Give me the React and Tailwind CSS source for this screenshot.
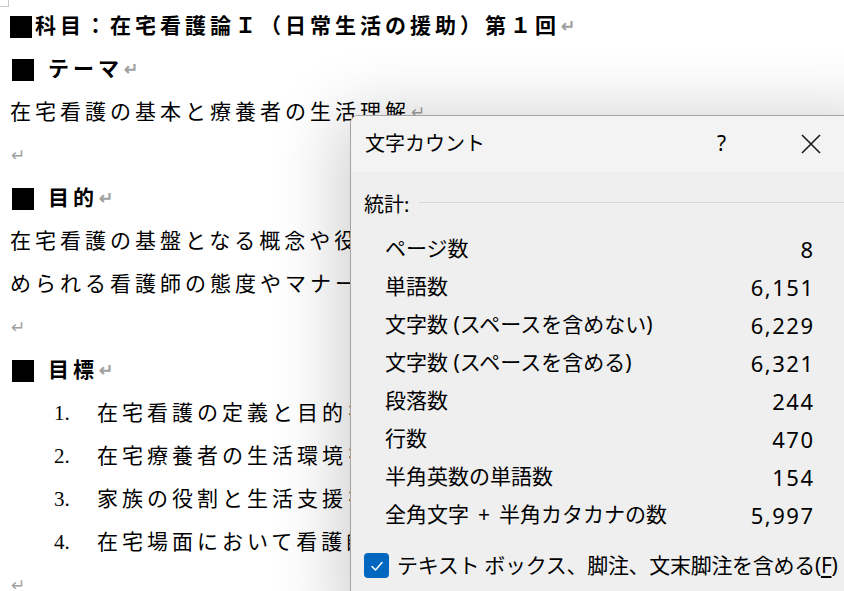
import React from "react";

const Ret = () => <span className="text-[#a0a0a0] text-[17px] tracking-normal ml-[1px]">↵</span>;

function Heading({ children }) {
  return (
    <div className="h-[43px] flex items-center font-bold whitespace-nowrap">
      <span className="w-[22px] h-[22px] bg-black inline-block ml-[2px]"></span>
      <span className="ml-[14px]">{children}</span>
      <Ret />
    </div>
  );
}

function Line({ children, ret }) {
  return (
    <div className="h-[43px] flex items-center whitespace-nowrap">
      <span>{children}</span>
      {ret && <Ret />}
    </div>
  );
}

function Item({ n, children }) {
  return (
    <div className="h-[43px] flex items-center whitespace-nowrap">
      <span className="w-[43px] ml-[44px] tracking-normal">{n}.</span>
      <span>{children}</span>
    </div>
  );
}

const rows = [
  ["ページ数", "8"],
  ["単語数", "6,151"],
  ["文字数 (スペースを含めない)", "6,229"],
  ["文字数 (スペースを含める)", "6,321"],
  ["段落数", "244"],
  ["行数", "470"],
  ["半角英数の単語数", "154"],
];

export default function App() {
  return (
    <div className="relative w-[844px] h-[591px] overflow-hidden bg-white">
      <div className="absolute left-0 top-[6px] w-[8px] h-px bg-[#c8c8c8]"></div>
      <div className="absolute left-[8px] top-0 w-px h-[7px] bg-[#c8c8c8]"></div>

      <div className="pt-[5px] pl-[10px] text-[21px] tracking-[4px] text-black font-['Liberation_Serif','Noto_Sans_CJK_JP',serif]">
        <div className="h-[43px] flex items-center font-bold whitespace-nowrap">
          <span className="w-[22px] h-[22px] bg-black inline-block mr-[3px]"></span>
          <span>科目：在宅看護論Ｉ（日常生活の援助）第１回</span>
          <Ret />
        </div>
        <Heading>テーマ</Heading>
        <Line ret>在宅看護の基本と療養者の生活理解</Line>
        <Line ret></Line>
        <Heading>目的</Heading>
        <Line>在宅看護の基盤となる概念や役割を理解し、在宅療養の場で求</Line>
        <Line>められる看護師の態度やマナーについて学ぶ。</Line>
        <Line ret></Line>
        <Heading>目標</Heading>
        <Item n="1">在宅看護の定義と目的を説明できる。</Item>
        <Item n="2">在宅療養者の生活環境を理解できる。</Item>
        <Item n="3">家族の役割と生活支援を理解できる。</Item>
        <Item n="4">在宅場面において看護師の役割を述べる。</Item>
        <div className="h-[43px] flex items-center">
          <Ret />
        </div>
      </div>

      <div className="absolute left-[350px] top-[115px] w-[540px] h-[520px] rounded-tl-[8px] border border-[#a3a3a3] bg-[#efefef] shadow-[-10px_0_70px_rgba(0,0,0,0.2)] overflow-hidden text-black font-['Noto_Sans','Noto_Sans_CJK_JP',sans-serif]">
        <div className="h-[56px] bg-[#f3f3f3] flex items-center pl-[14px]">
          <span className="text-[20px]">文字カウント</span>
          <span className="ml-[232px] text-[21px]">?</span>
          <svg className="ml-[74px]" width="22" height="22" viewBox="0 0 22 22">
            <path d="M2 2 L20 20 M20 2 L2 20" stroke="#1a1a1a" strokeWidth="1.6" fill="none" />
          </svg>
        </div>
        <div className="flex items-center h-[50px] mt-[8px] pl-[13px]">
          <span className="text-[20px]">統計:</span>
          <div className="flex-1 h-px bg-[#d6d6d6] ml-[10px] -mt-[6px]"></div>
        </div>
        <div className="ml-[34px] w-[428px]">
          {rows.map(([k, v]) => (
            <div key={k} className="h-[38px] flex items-center justify-between text-[21px]">
              <span>{k}</span>
              <span className="text-[22px] tracking-[1.5px] -mr-[1.5px]">{v}</span>
            </div>
          ))}
          <div className="h-[38px] flex items-center justify-between text-[21px]">
            <span className="flex items-center">
              全角文字<span className="mx-[9px]">+</span>半角カタカナの数
            </span>
            <span className="text-[22px] tracking-[1.5px] -mr-[1.5px]">5,997</span>
          </div>
        </div>
        <div className="flex items-center pl-[13px] mt-[16px]">
          <div className="w-[25px] h-[25px] rounded-[4px] bg-[#0067c0] flex items-center justify-center">
            <svg width="14" height="14" viewBox="0 0 14 14">
              <path d="M2 7.5 L5.5 11 L12 3.5" stroke="white" strokeWidth="1.5" fill="none" strokeLinecap="round" strokeLinejoin="round" />
            </svg>
          </div>
          <span className="ml-[8px] text-[21px] tracking-[-0.3px] whitespace-nowrap">
            テキスト ボックス、脚注、文末脚注を含める(<span className="underline underline-offset-[3px]">F</span>)
          </span>
        </div>
      </div>
    </div>
  );
}
